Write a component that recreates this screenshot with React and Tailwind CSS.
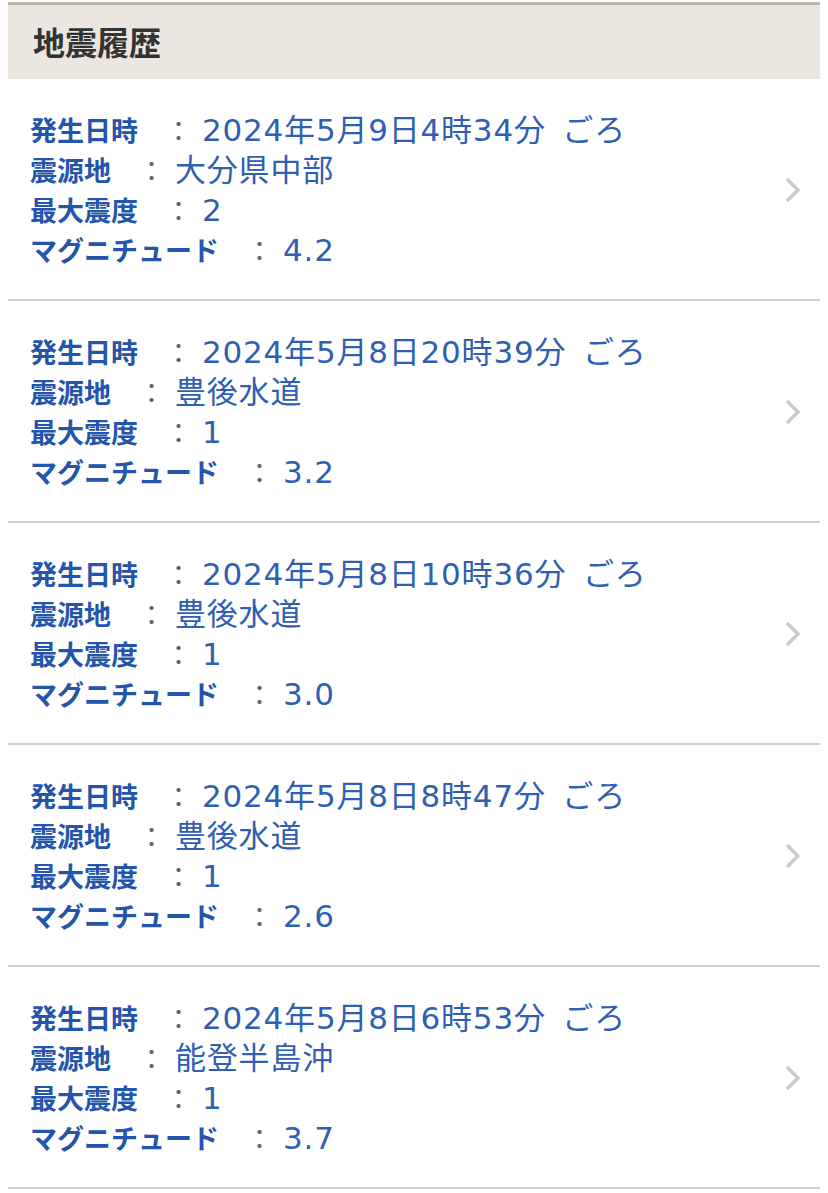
import React from 'react'

const quakes = [
    { time: '2024年5月9日4時34分 ごろ', place: '大分県中部', intensity: '2', magnitude: '4.2' },
    { time: '2024年5月8日20時39分 ごろ', place: '豊後水道', intensity: '1', magnitude: '3.2' },
    { time: '2024年5月8日10時36分 ごろ', place: '豊後水道', intensity: '1', magnitude: '3.0' },
    { time: '2024年5月8日8時47分 ごろ', place: '豊後水道', intensity: '1', magnitude: '2.6' },
    { time: '2024年5月8日6時53分 ごろ', place: '能登半島沖', intensity: '1', magnitude: '3.7' },
]

function Row({ label, value }) {
    return (
        <div className="flex items-center h-[40px] whitespace-nowrap">
            <span className="font-bold text-[#2455ad]">{label}</span>
            <span className="text-[#5a6470]">　：</span>
            <span className="ml-[10px] text-[#2e5fb3] font-['DejaVu_Sans','Noto_Sans_CJK_JP',sans-serif] text-[31px] tracking-[0.8px] [word-spacing:6px]">{value}</span>
        </div>
    )
}

function QuakeItem({ quake }) {
    return (
        <div className="flex items-center border-b-2 border-[#d0d0d0] pl-[22px] pr-[18px] pt-[31px] pb-[29px]">
            <div className="flex-1 text-[27px]">
                <Row label="発生日時" value={quake.time} />
                <Row label="震源地" value={quake.place} />
                <Row label="最大震度" value={quake.intensity} />
                <Row label="マグニチュード" value={quake.magnitude} />
            </div>
            <svg width="18" height="26" viewBox="0 0 18 26" className="shrink-0">
                <polyline points="3,2 14,13 3,24" fill="none" stroke="#c9c9c9" strokeWidth="3.2" />
            </svg>
        </div>
    )
}

export default function App() {
    return (
        <div className="min-h-screen bg-white font-['Noto_Sans_CJK_JP',sans-serif]">
            <div className="px-[8px] pt-[2px]">
                {/* Section header */}
                <div className="h-[77px] bg-[#ebe6e0] border-t-[3px] border-[#bdb6ad] flex items-center pl-[25px] pb-[3px]">
                    <h2 className="text-[32px] font-bold text-[#333333] leading-none">地震履歴</h2>
                </div>

                {/* Quake list */}
                <div>
                    {quakes.map((q, i) => (
                        <QuakeItem key={i} quake={q} />
                    ))}
                </div>
            </div>
        </div>
    )
}
